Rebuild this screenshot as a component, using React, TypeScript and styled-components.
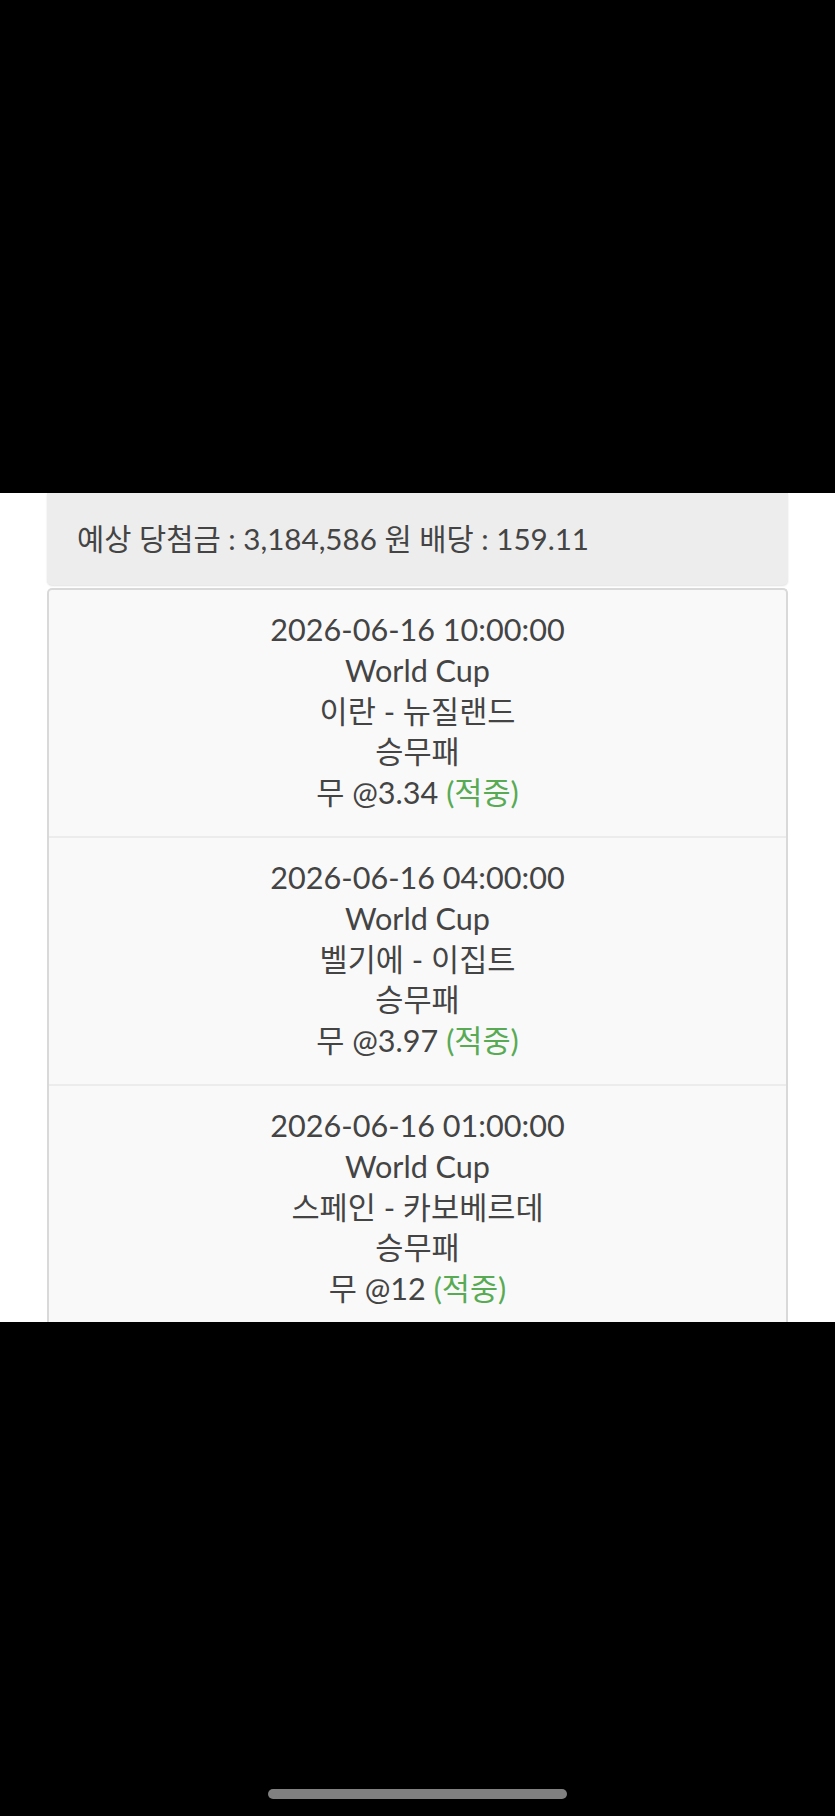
import React from "react";
import styled, { createGlobalStyle } from "styled-components";

const Global = createGlobalStyle`
  html, body { margin: 0; padding: 0; background: #000; }
  * { box-sizing: border-box; }
`;

const Screen = styled.div`
  width: 835px;
  height: 1816px;
  display: flex;
  flex-direction: column;
  background: #000;
  font-family: Lato, "Noto Sans CJK KR", sans-serif;
  color: #444;
`;

const TopMask = styled.div`
  height: 493px;
  background: #000;
  flex: none;
`;

const Content = styled.div`
  height: 829px;
  flex: none;
  background: #fff;
  overflow: hidden;
  padding: 0 47px;
  display: flex;
  flex-direction: column;
  gap: 3px;
`;

const Summary = styled.div`
  flex: none;
  height: 92px;
  background: #ededed;
  border-radius: 0 0 5px 5px;
  box-shadow: 0 1px 2px rgba(0, 0, 0, 0.12);
  display: flex;
  align-items: center;
  padding: 0 0 4px 30px;
  font-size: 29.6px;
  color: #444;
`;

const Card = styled.div`
  flex: none;
  border: 2px solid #d9d9d9;
  border-bottom: none;
  border-radius: 5px 5px 0 0;
  background: #f9f9f9;
  display: flex;
  flex-direction: column;
`;

const Item = styled.div<{ $first?: boolean }>`
  border-top: ${(p) => (p.$first ? "none" : "2px solid #ececec")};
  padding: 20px 0 22px;
  display: flex;
  flex-direction: column;
  align-items: center;
  font-size: 30.6px;
  line-height: 40.8px;
  color: #444;
`;

const Line = styled.div`
  white-space: nowrap;
`;

const Hit = styled.span`
  color: #58ab54;
`;

const BottomMask = styled.div`
  flex: 1;
  background: #000;
  display: flex;
  align-items: flex-end;
  justify-content: center;
  padding-bottom: 17px;
`;

const HomeIndicator = styled.div`
  width: 299px;
  height: 10px;
  border-radius: 5px;
  background: #808080;
`;

const games = [
  { date: "2026-06-16 10:00:00", teams: "이란 - 뉴질랜드", odds: "3.34" },
  { date: "2026-06-16 04:00:00", teams: "벨기에 - 이집트", odds: "3.97" },
  { date: "2026-06-16 01:00:00", teams: "스페인 - 카보베르데", odds: "12" },
];

export default function App() {
  return (
    <>
      <Global />
      <Screen>
        <TopMask />
        <Content>
          <Summary>예상 당첨금 : 3,184,586 원 배당 : 159.11</Summary>
          <Card>
            {games.map((g, i) => (
              <Item key={g.date} $first={i === 0}>
                <Line>{g.date}</Line>
                <Line>World Cup</Line>
                <Line>{g.teams}</Line>
                <Line>승무패</Line>
                <Line>
                  무 @{g.odds} <Hit>(적중)</Hit>
                </Line>
              </Item>
            ))}
          </Card>
        </Content>
        <BottomMask>
          <HomeIndicator />
        </BottomMask>
      </Screen>
    </>
  );
}
